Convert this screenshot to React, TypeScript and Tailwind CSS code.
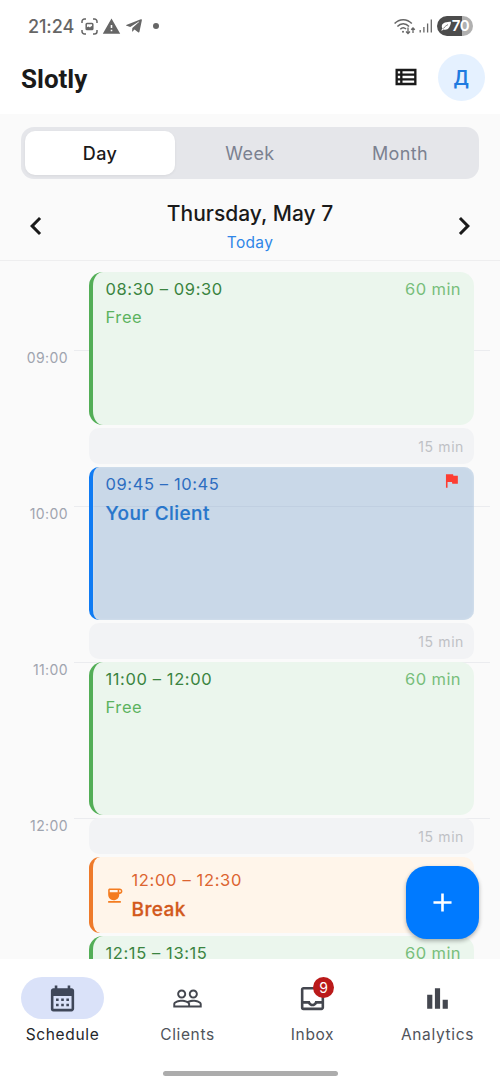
import { useState } from 'react'
import type { ReactNode } from 'react'
import { FaTelegramPlane } from 'react-icons/fa'
import {
  MdAdd,
  MdBarChart,
  MdCalendarMonth,
  MdChevronLeft,
  MdChevronRight,
  MdCoffee,
  MdFlag,
  MdOutlineInbox,
  MdOutlineViewList,
  MdPeopleOutline,
  MdWarning,
} from 'react-icons/md'

const VIEWS = ['Day', 'Week', 'Month']
const HOURS = ['09:00', '10:00', '11:00', '12:00']

function ScreenshotIcon() {
  return (
    <svg width="17" height="17" viewBox="0 0 17 17" fill="none" stroke="#666" strokeWidth="1.5">
      <path d="M1 5V3.5A2.5 2.5 0 0 1 3.5 1H5M12 1h1.5A2.5 2.5 0 0 1 16 3.5V5M16 12v1.5a2.5 2.5 0 0 1-2.5 2.5H12M5 16H3.5A2.5 2.5 0 0 1 1 13.5V12" />
      <rect x="5.2" y="5.5" width="6.6" height="6" rx="0.8" />
      <path d="M5.5 11.3V9.5l2-1 1.5 1 1.3-1.5 1.500 1v2.300z" fill="#666" stroke="none" />
    </svg>
  )
}

function WifiIcon() {
  return (
    <svg width="22" height="17" viewBox="0 0 22 17" fill="none" stroke="#666" strokeWidth="1.5">
      <path d="M.6 5.6C5.2.3 13.2.3 17.8 5.6M3.4 8.6c3.2-3.7 8.4-3.7 11.6 0M6.3 11.3c1.7-1.8 4.1-1.8 5.7-.3" />
      <circle cx="9" cy="13.7" r="1" fill="#666" stroke="none" />
      <path d="M14 9.5v6M12 13.5l2 2 2-2M19 15V10M17.2 11.8L19 10l1.8 1.800" strokeWidth="1.3" />
    </svg>
  )
}

function SignalIcon() {
  return (
    <svg width="14" height="14" viewBox="0 0 14 14" stroke="#666" strokeWidth="1.3">
      <path d="M1.2 11v2.5M4.9 8v5.5M8.6 4.5v9M12.3.5v13" />
    </svg>
  )
}

function StatusBar() {
  return (
    <div className="flex h-[52px] items-center justify-between pr-[27px] pl-7">
      <div className="flex items-center text-[#666]">
        <span className="w-[53px] text-[18px] font-medium tracking-[-0.1px]">21:24</span>
        <ScreenshotIcon />
        <MdWarning size={19} className="ml-[4px]" />
        <FaTelegramPlane size={18} className="ml-[4px]" />
        <span className="ml-[10px] size-[6px] rounded-full bg-[#666]" />
      </div>
      <div className="flex items-center">
        <WifiIcon />
        <span className="ml-[3px]">
          <SignalIcon />
        </span>
        <div className="ml-[4px] flex h-5 w-9 items-center justify-center rounded-full bg-linear-to-r from-[#4c4c4c] from-70% to-[#b0b0b0] to-70% text-white">
          <svg width="10" height="10" viewBox="0 0 10 10" fill="#fff">
            <path d="M10 .8C6 .8.8 1.5.8 5.5c0 1 .3 1.6.7 2.100L.3 9.200l.6.5 1.400-1.300C6.500 10 9.500 6.500 10 .8z" />
            <path d="M2.200 7.600C4 5.500 5 4.800 7 3.600" stroke="#4c4c4c" strokeWidth="0.7" />
          </svg>
          <span className="ml-px text-[15px] leading-5 font-semibold tracking-[-0.5px]">70</span>
        </div>
      </div>
    </div>
  )
}

function Header() {
  return (
    <header className="flex h-[62px] items-start justify-between pt-[2px] pr-[15.5px] pl-[21px]">
      <h1 className="pt-[9.5px] font-[Roboto,sans-serif] text-[26px] leading-[30px] font-bold">
        Slotly
      </h1>
      <div className="flex items-center gap-[18px]">
        <MdOutlineViewList size={28} className="text-[#1a1a1a]" />
        <div className="flex size-[46.5px] items-center justify-center rounded-full bg-[#e5f1ff] pt-px font-[Roboto,sans-serif] text-[20px] font-medium text-[#1f7be0]">
          Д
        </div>
      </div>
    </header>
  )
}

function ViewSwitch() {
  const [view, setView] = useState('Day')

  return (
    <div className="mx-[21px] mt-[13px] grid h-[52px] grid-cols-3 rounded-[13px] bg-[#e5e6ea] p-[4px]">
      {VIEWS.map((item) => (
        <button
          key={item}
          type="button"
          onClick={() => setView(item)}
          className={`rounded-[10px] text-[18px] tracking-[0.4px] ${
            item === view
              ? 'bg-white font-medium text-[#1a1a1a] shadow-[0_1px_3px_rgb(0,0,0,0.06)]'
              : 'text-[#7b8190]'
          }`}
        >
          {item}
        </button>
      ))}
    </div>
  )
}

function DateBar() {
  return (
    <div className="flex h-[82px] items-center justify-between border-b border-[#eeeeef] px-[18px] pt-3">
      <MdChevronLeft size={36} />
      <div className="mt-[5px] text-center">
        <p className="text-[21px] leading-[30px] font-medium">Thursday, May 7</p>
        <p className="text-[15.5px] leading-7 tracking-[0.35px] text-[#2f86e8]">Today</p>
      </div>
      <MdChevronRight size={36} />
    </div>
  )
}

interface SlotProps {
  time: string
}

function FreeSlot({ time }: SlotProps) {
  return (
    <div className="flex h-[153px] shrink-0 items-start justify-between rounded-[14px] border-l-4 border-[#53ae57] bg-[#ebf6ed] pt-[3px] pr-[13px] pl-[13px] text-[16.5px] tracking-[0.6px]">
      <div>
        <p className="leading-7 text-[#3a8440]">{time}</p>
        <p className="leading-7 text-[#5cb360]">Free</p>
      </div>
      <p className="leading-7 tracking-[0.4px] text-[#78be7b]">60 min</p>
    </div>
  )
}

function Gap() {
  return (
    <div className="flex h-[36px] shrink-0 items-center justify-end rounded-[10px] bg-[#f2f3f5] pr-[10px] text-[14px] tracking-[0.6px] text-[#bfc1c5]">
      15 min
    </div>
  )
}

function ClientSlot() {
  return (
    <div className="flex h-[153px] shrink-0 items-start justify-between rounded-[10px] border-l-4 border-[#0f7bf3] bg-[#80a5cd]/40 pt-[3px] pr-[13px] pl-[13px] shadow-[inset_0_0_3px_#d8e3ef]">
      <div>
        <p className="text-[16.5px] leading-7 tracking-[0.6px] text-[#2d6dc0]">09:45 – 10:45</p>
        <p className="mt-px text-[19px] leading-[30px] font-medium tracking-[0.45px] text-[#2876cb] [-webkit-text-stroke:0.2px]">
          Your Client
        </p>
      </div>
      <MdFlag size={19} className="mt-px text-[#fd3d32]" />
    </div>
  )
}

function BreakSlot() {
  return (
    <div className="flex h-[76px] shrink-0 items-center rounded-[11px] border-l-4 border-[#ee7a2a] bg-[#fff5ea] pl-[12px]">
      <MdCoffee size={19} className="text-[#f47c20]" />
      <div className="ml-[8px]">
        <p className="text-[16.5px] leading-7 tracking-[0.65px] text-[#dc6430]">12:00 – 12:30</p>
        <p className="mt-px text-[19px] leading-[30px] font-medium tracking-[0.4px] text-[#d2591c] [-webkit-text-stroke:0.3px]">
          Break
        </p>
      </div>
    </div>
  )
}

function Timeline() {
  return (
    <main className="relative grid h-[698px] overflow-hidden">
      {/* hour grid sits under the slots in the same cell */}
      <div className="col-start-1 row-start-1 pt-[88.6px] pr-[10px]">
        {HOURS.map((hour) => (
          <div key={hour} className="flex h-[156.2px] items-start">
            <span className="w-[74px] pr-[6px] text-right text-[14px] leading-4 tracking-[0.4px] text-[#9fa4af]">
              {hour}
            </span>
            <span className="h-px flex-1 bg-[#ebecef]" />
          </div>
        ))}
      </div>
      <div className="z-10 col-start-1 row-start-1 flex h-[698px] flex-col gap-[3px] overflow-hidden pt-[11px] pr-[26px] pl-[88.5px]">
        <FreeSlot time="08:30 – 09:30" />
        <Gap />
        <ClientSlot />
        <Gap />
        <FreeSlot time="11:00 – 12:00" />
        <Gap />
        <BreakSlot />
        <FreeSlot time="12:15 – 13:15" />
      </div>
      <button
        type="button"
        aria-label="Add"
        className="absolute right-[21px] bottom-[20.5px] z-20 flex size-[73px] items-center justify-center rounded-[21px] bg-[#007aff] text-white shadow-[0_2px_4px_rgb(0,0,0,0.3)]"
      >
        <MdAdd size={31} />
      </button>
    </main>
  )
}

interface NavItemProps {
  label: string
  icon: ReactNode
  active?: boolean
  badge?: number
}

function NavItem({ label, icon, active = false, badge }: NavItemProps) {
  return (
    <button type="button" className="flex flex-1 flex-col items-center">
      <span
        className={`relative flex h-[42px] w-[83px] items-center justify-center rounded-full ${
          active ? 'bg-[#dae2f9] text-[#3f4759]' : 'text-[#44474f]'
        }`}
      >
        {icon}
        {badge && (
          <span className="absolute top-0 left-[42px] flex size-[21px] items-center justify-center rounded-full bg-[#ba1a1a] text-[14px] leading-none text-white">
            {badge}
          </span>
        )}
      </span>
      <span
        className={`mt-[4px] text-[15.5px] leading-6 tracking-[0.65px] ${
          active ? 'text-[#24262b]' : 'text-[#50535a]'
        }`}
      >
        {label}
      </span>
    </button>
  )
}

function BottomNav() {
  return (
    <footer className="flex h-[124px] flex-col items-center justify-between bg-white pt-[18px] pb-[7px]">
      <nav className="flex w-full">
        <NavItem label="Schedule" icon={<MdCalendarMonth size={31} />} active />
        <NavItem label="Clients" icon={<MdPeopleOutline size={31} />} />
        <NavItem label="Inbox" icon={<MdOutlineInbox size={31} />} badge={9} />
        <NavItem label="Analytics" icon={<MdBarChart size={31} />} />
      </nav>
      <div className="h-[5px] w-[175px] rounded-full bg-[#acacac]" />
    </footer>
  )
}

export default function App() {
  return (
    <div className="flex h-[1083px] w-[500px] flex-col overflow-hidden bg-[#fafafa] font-[Inter,sans-serif] text-[#1a1a1a]">
      <div className="bg-white">
        <StatusBar />
        <Header />
      </div>
      <ViewSwitch />
      <DateBar />
      <Timeline />
      <BottomNav />
    </div>
  )
}
